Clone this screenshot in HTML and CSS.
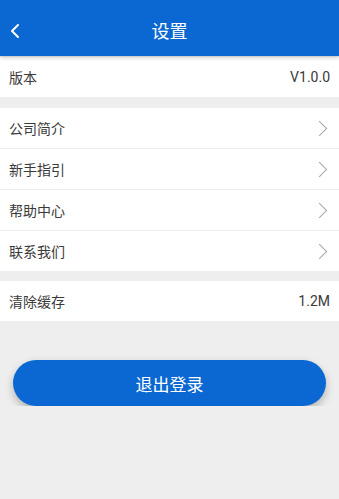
FILE: index.html
```html
<!DOCTYPE html>
<html>

<head>
    <meta charset="UTF-8">
    <meta name="viewport" content="width=device-width, initial-scale=1.0" />
    <title>设置</title>
    <link rel="stylesheet" href="styles.css">
</head>

<body>
    <header class="topbar">
        <a class="back" href="#">
            <svg width="12" height="16" viewBox="0 0 12 16">
                <path d="M9 2 L3 8 L9 14" fill="none" stroke="#fff" stroke-width="2" stroke-linecap="round" stroke-linejoin="round" />
            </svg>
        </a>
        <h1>设置</h1>
    </header>

    <ul class="group">
        <li class="row">
            <span>版本</span>
            <span class="value">V1.0.0</span>
        </li>
    </ul>

    <ul class="group">
        <li class="row">
            <span>公司简介</span>
            <span class="arrow"></span>
        </li>
        <li class="row">
            <span>新手指引</span>
            <span class="arrow"></span>
        </li>
        <li class="row">
            <span>帮助中心</span>
            <span class="arrow"></span>
        </li>
        <li class="row">
            <span>联系我们</span>
            <span class="arrow"></span>
        </li>
    </ul>

    <ul class="group">
        <li class="row">
            <span>清除缓存</span>
            <span class="value">1.2M</span>
        </li>
    </ul>

    <div class="logout">
        <button type="button">退出登录</button>
    </div>
</body>

</html>
```

FILE: styles.css
```css
body {
    margin: 0;
    background-color: #eeeeee;
    font-family: Roboto, "Noto Sans CJK SC", sans-serif;
    color: #3a3a3a;
}

.topbar {
    position: relative;
    height: 56px;
    background-color: #0b68d2;
    box-shadow: 0 2px 4px rgba(0, 0, 0, .18);
    display: flex;
    align-items: center;
    justify-content: center;
}

.topbar h1 {
    margin: 0;
    font-size: 18px;
    font-weight: normal;
    color: #fff;
    padding-top: 4px;
}

.back {
    position: absolute;
    left: 9px;
    top: 23px;
    display: block;
    width: 12px;
    height: 16px;
}

.back svg {
    display: block;
}

.group {
    list-style-type: none;
    margin: 0 0 10px 0;
    padding: 0;
    background-color: #fff;
}

.group:first-of-type {
    margin-top: 1px;
    margin-bottom: 11px;
}

.row {
    height: 40px;
    display: flex;
    align-items: center;
    justify-content: space-between;
    padding: 0 9px 0 9px;
    font-size: 14px;
    border-top: 1px solid #ececec;
}

.row:first-child {
    border-top: none;
}

.value {
    font-size: 14px;
}

.arrow {
    width: 10px;
    height: 10px;
    border-top: 1px solid #a6a6a6;
    border-right: 1px solid #a6a6a6;
    transform: rotate(45deg);
    margin-right: 5px;
}

.logout {
    padding: 29px 13px 0 13px;
}

.logout button {
    display: block;
    width: 100%;
    height: 46px;
    border: none;
    border-radius: 23px;
    background-color: #0b68d2;
    color: #fff;
    font-family: Roboto, "Noto Sans CJK SC", sans-serif;
    font-size: 17px;
    box-shadow: 0 4px 8px rgba(0, 0, 0, .25);
}
```
